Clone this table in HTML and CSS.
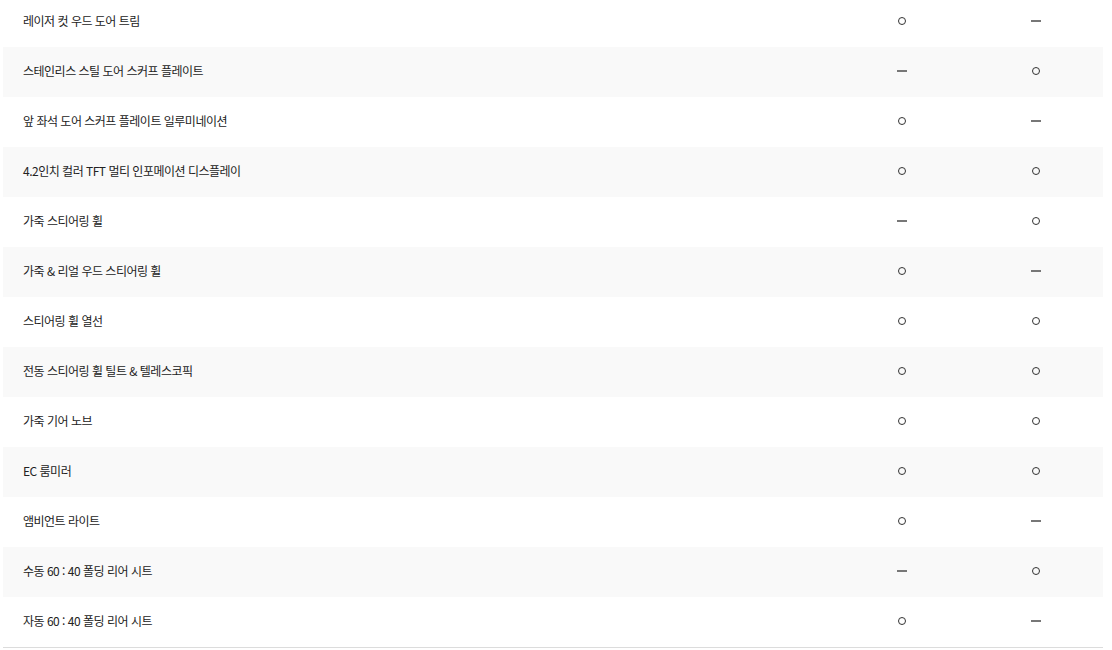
FILE: index.html
```html
<!DOCTYPE html>
<html lang="ko">
<head>
<meta charset="utf-8">
<link rel="stylesheet" href="styles.css">
</head>
<body>
<div class="spec">
  <div class="row"><div class="name">레이저 컷 우드 도어 트림</div><div class="cell"><span class="yes"></span></div><div class="cell"><span class="no"></span></div></div>
  <div class="row"><div class="name">스테인리스 스틸 도어 스커프 플레이트</div><div class="cell"><span class="no"></span></div><div class="cell"><span class="yes"></span></div></div>
  <div class="row"><div class="name">앞 좌석 도어 스커프 플레이트 일루미네이션</div><div class="cell"><span class="yes"></span></div><div class="cell"><span class="no"></span></div></div>
  <div class="row"><div class="name">4.2인치 컬러 TFT 멀티 인포메이션 디스플레이</div><div class="cell"><span class="yes"></span></div><div class="cell"><span class="yes"></span></div></div>
  <div class="row"><div class="name">가죽 스티어링 휠</div><div class="cell"><span class="no"></span></div><div class="cell"><span class="yes"></span></div></div>
  <div class="row"><div class="name">가죽 &amp; 리얼 우드 스티어링 휠</div><div class="cell"><span class="yes"></span></div><div class="cell"><span class="no"></span></div></div>
  <div class="row"><div class="name">스티어링 휠 열선</div><div class="cell"><span class="yes"></span></div><div class="cell"><span class="yes"></span></div></div>
  <div class="row"><div class="name">전동 스티어링 휠 틸트 &amp; 텔레스코픽</div><div class="cell"><span class="yes"></span></div><div class="cell"><span class="yes"></span></div></div>
  <div class="row"><div class="name">가죽 기어 노브</div><div class="cell"><span class="yes"></span></div><div class="cell"><span class="yes"></span></div></div>
  <div class="row"><div class="name">EC 룸미러</div><div class="cell"><span class="yes"></span></div><div class="cell"><span class="yes"></span></div></div>
  <div class="row"><div class="name">앰비언트 라이트</div><div class="cell"><span class="yes"></span></div><div class="cell"><span class="no"></span></div></div>
  <div class="row"><div class="name">수동 60 : 40 폴딩 리어 시트</div><div class="cell"><span class="no"></span></div><div class="cell"><span class="yes"></span></div></div>
  <div class="row"><div class="name">자동 60 : 40 폴딩 리어 시트</div><div class="cell"><span class="yes"></span></div><div class="cell"><span class="no"></span></div></div>
</div>
</body>
</html>
```
FILE: styles.css
```css
html, body {
  margin: 0;
  padding: 0;
  background: #fff;
}
body {
  font-family: "Noto Sans CJK KR", "Noto Sans", sans-serif;
  font-size: 12px;
  color: #222;
}
.spec {
  margin: -3px 9px 0 3px;
  border-bottom: 1px solid #dcdcdc;
}
.row {
  display: grid;
  grid-template-columns: 1fr 134px 134px;
  height: 50px;
  box-sizing: border-box;
  padding-bottom: 2px;
  align-items: center;
  background: #fff;
}
.row:nth-child(even) {
  background: #f9f9f9;
}
.name {
  padding-left: 20px;
  letter-spacing: -0.5px;
  line-height: 1;
}
.cell {
  display: flex;
  justify-content: center;
  align-items: center;
}
.yes {
  width: 6px;
  height: 6px;
  border: 1.5px solid #333;
  border-radius: 50%;
}
.no {
  width: 10px;
  height: 2px;
  background: #777;
}
```
